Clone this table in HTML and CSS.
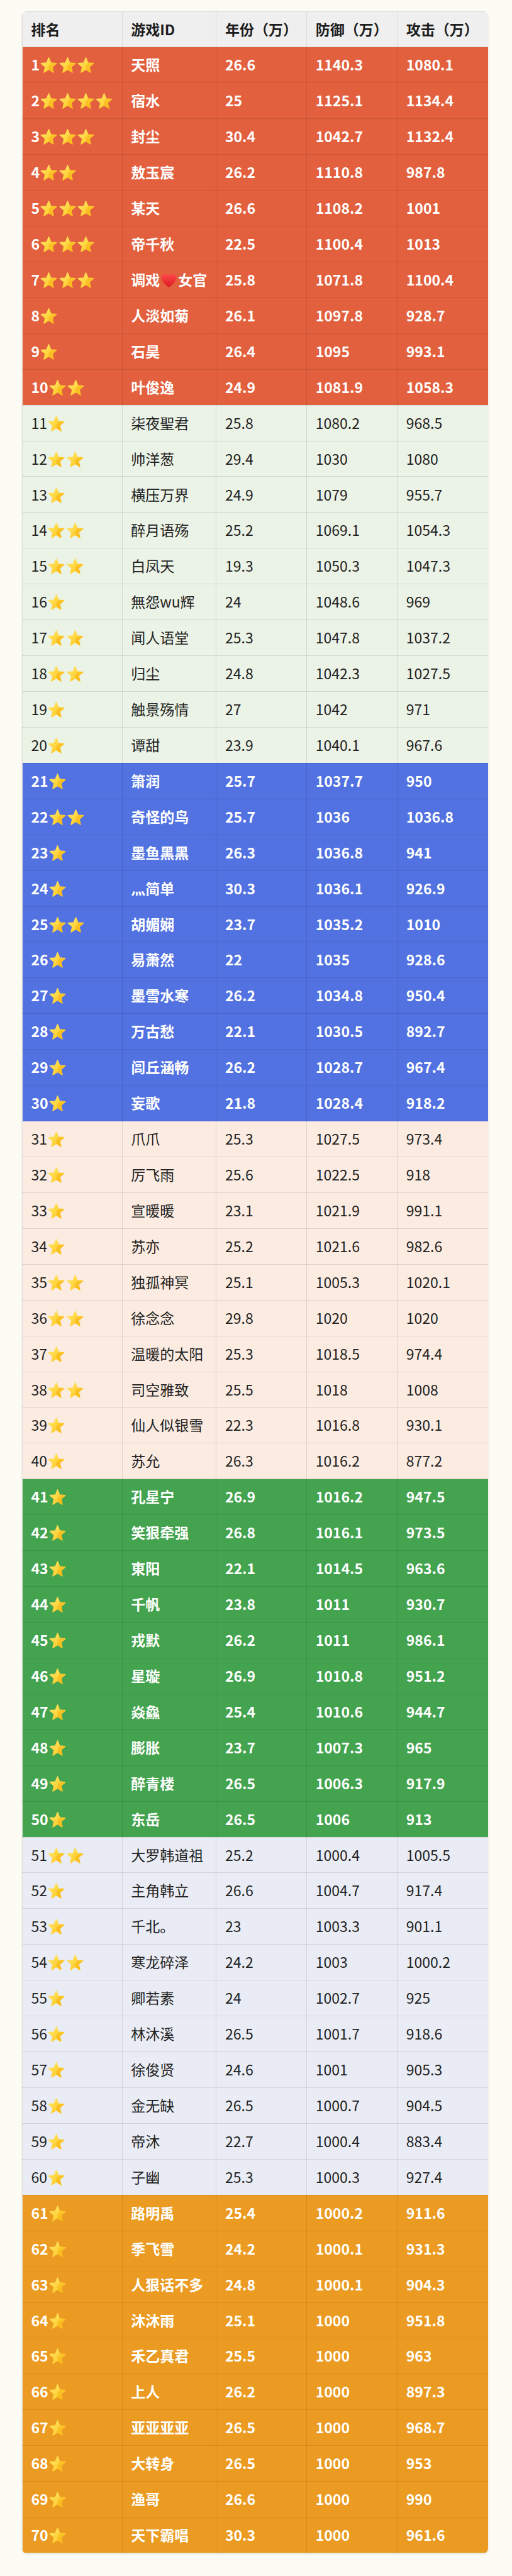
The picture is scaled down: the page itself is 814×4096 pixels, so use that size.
FILE: index.html
```html
<!DOCTYPE html>
<html lang="zh-CN">
<head>
<meta charset="utf-8">
<title>排名</title>
<link rel="stylesheet" href="styles.css">
</head>
<body>
<svg class="defs" aria-hidden="true">
  <defs>
    <linearGradient id="sg" x1="0" y1="0" x2="1" y2="1">
      <stop offset="0" stop-color="#FFE866"/>
      <stop offset="1" stop-color="#FFC21A"/>
    </linearGradient>
    <linearGradient id="hg" x1="0" y1="0" x2="0" y2="1">
      <stop offset="0" stop-color="#FF4A4A"/>
      <stop offset="1" stop-color="#D9181F"/>
    </linearGradient>
    <symbol id="s" viewBox="0 0 24 24">
      <polygon points="12,1.5 15.06,8.79 22.94,9.45 16.95,14.61 18.76,22.3 12,18.2 5.24,22.3 7.05,14.61 1.06,9.45 8.94,8.79" fill="url(#sg)" stroke="url(#sg)" stroke-width="1.2" stroke-linejoin="round"/>
      <polygon points="12,13 22.94,9.45 16.95,14.61 18.76,22.3 12,18.2" fill="#F0A000" opacity="0.35"/>
      <polygon points="12,13 15.06,8.79 22.94,9.45" fill="#F6B000" opacity="0.35"/>
    </symbol>
    <symbol id="h" viewBox="0 0 24 22">
      <path d="M12 21 C5 15.8 1.2 12 1.2 7.2 C1.2 3.9 3.8 1.3 7 1.3 C9.1 1.3 11 2.5 12 4.3 C13 2.5 14.9 1.3 17 1.3 C20.2 1.3 22.8 3.9 22.8 7.2 C22.8 12 19 15.8 12 21Z" fill="url(#hg)"/>
    </symbol>
  </defs>
</svg>
<div class="page">
<div class="board">
<table class="rank">
<colgroup><col class="c1"><col class="c2"><col class="c3"><col class="c4"><col class="c5"></colgroup>
<thead>
<tr><th>排名</th><th>游戏ID</th><th>年份（万）</th><th>防御（万）</th><th>攻击（万）</th></tr>
</thead>
<tbody>
<tr class="g1"><td>1<svg class="star"><use href="#s"/></svg><svg class="star"><use href="#s"/></svg><svg class="star"><use href="#s"/></svg></td><td>天照</td><td>26.6</td><td>1140.3</td><td>1080.1</td></tr>
<tr class="g1"><td>2<svg class="star"><use href="#s"/></svg><svg class="star"><use href="#s"/></svg><svg class="star"><use href="#s"/></svg><svg class="star"><use href="#s"/></svg></td><td>宿水</td><td>25</td><td>1125.1</td><td>1134.4</td></tr>
<tr class="g1"><td>3<svg class="star"><use href="#s"/></svg><svg class="star"><use href="#s"/></svg><svg class="star"><use href="#s"/></svg></td><td>封尘</td><td>30.4</td><td>1042.7</td><td>1132.4</td></tr>
<tr class="g1"><td>4<svg class="star"><use href="#s"/></svg><svg class="star"><use href="#s"/></svg></td><td>敖玉宸</td><td>26.2</td><td>1110.8</td><td>987.8</td></tr>
<tr class="g1"><td>5<svg class="star"><use href="#s"/></svg><svg class="star"><use href="#s"/></svg><svg class="star"><use href="#s"/></svg></td><td>某天</td><td>26.6</td><td>1108.2</td><td>1001</td></tr>
<tr class="g1"><td>6<svg class="star"><use href="#s"/></svg><svg class="star"><use href="#s"/></svg><svg class="star"><use href="#s"/></svg></td><td>帝千秋</td><td>22.5</td><td>1100.4</td><td>1013</td></tr>
<tr class="g1"><td>7<svg class="star"><use href="#s"/></svg><svg class="star"><use href="#s"/></svg><svg class="star"><use href="#s"/></svg></td><td>调戏<svg class="heart"><use href="#h"/></svg>女官</td><td>25.8</td><td>1071.8</td><td>1100.4</td></tr>
<tr class="g1"><td>8<svg class="star"><use href="#s"/></svg></td><td>人淡如菊</td><td>26.1</td><td>1097.8</td><td>928.7</td></tr>
<tr class="g1"><td>9<svg class="star"><use href="#s"/></svg></td><td>石昊</td><td>26.4</td><td>1095</td><td>993.1</td></tr>
<tr class="g1"><td>10<svg class="star"><use href="#s"/></svg><svg class="star"><use href="#s"/></svg></td><td>叶俊逸</td><td>24.9</td><td>1081.9</td><td>1058.3</td></tr>

<tr class="g2"><td>11<svg class="star"><use href="#s"/></svg></td><td>柒夜聖君</td><td>25.8</td><td>1080.2</td><td>968.5</td></tr>
<tr class="g2"><td>12<svg class="star"><use href="#s"/></svg><svg class="star"><use href="#s"/></svg></td><td>帅洋葱</td><td>29.4</td><td>1030</td><td>1080</td></tr>
<tr class="g2"><td>13<svg class="star"><use href="#s"/></svg></td><td>横压万界</td><td>24.9</td><td>1079</td><td>955.7</td></tr>
<tr class="g2"><td>14<svg class="star"><use href="#s"/></svg><svg class="star"><use href="#s"/></svg></td><td>醉月语殇</td><td>25.2</td><td>1069.1</td><td>1054.3</td></tr>
<tr class="g2"><td>15<svg class="star"><use href="#s"/></svg><svg class="star"><use href="#s"/></svg></td><td>白凤天</td><td>19.3</td><td>1050.3</td><td>1047.3</td></tr>
<tr class="g2"><td>16<svg class="star"><use href="#s"/></svg></td><td>無怨wu辉</td><td>24</td><td>1048.6</td><td>969</td></tr>
<tr class="g2"><td>17<svg class="star"><use href="#s"/></svg><svg class="star"><use href="#s"/></svg></td><td>闻人语堂</td><td>25.3</td><td>1047.8</td><td>1037.2</td></tr>
<tr class="g2"><td>18<svg class="star"><use href="#s"/></svg><svg class="star"><use href="#s"/></svg></td><td>归尘</td><td>24.8</td><td>1042.3</td><td>1027.5</td></tr>
<tr class="g2"><td>19<svg class="star"><use href="#s"/></svg></td><td>触景殇情</td><td>27</td><td>1042</td><td>971</td></tr>
<tr class="g2"><td>20<svg class="star"><use href="#s"/></svg></td><td>谭甜</td><td>23.9</td><td>1040.1</td><td>967.6</td></tr>

<tr class="g3"><td>21<svg class="star"><use href="#s"/></svg></td><td>箫润</td><td>25.7</td><td>1037.7</td><td>950</td></tr>
<tr class="g3"><td>22<svg class="star"><use href="#s"/></svg><svg class="star"><use href="#s"/></svg></td><td>奇怪的鸟</td><td>25.7</td><td>1036</td><td>1036.8</td></tr>
<tr class="g3"><td>23<svg class="star"><use href="#s"/></svg></td><td>墨鱼黑黑</td><td>26.3</td><td>1036.8</td><td>941</td></tr>
<tr class="g3"><td>24<svg class="star"><use href="#s"/></svg></td><td>灬简单</td><td>30.3</td><td>1036.1</td><td>926.9</td></tr>
<tr class="g3"><td>25<svg class="star"><use href="#s"/></svg><svg class="star"><use href="#s"/></svg></td><td>胡媚娴</td><td>23.7</td><td>1035.2</td><td>1010</td></tr>
<tr class="g3"><td>26<svg class="star"><use href="#s"/></svg></td><td>易萧然</td><td>22</td><td>1035</td><td>928.6</td></tr>
<tr class="g3"><td>27<svg class="star"><use href="#s"/></svg></td><td>墨雪水寒</td><td>26.2</td><td>1034.8</td><td>950.4</td></tr>
<tr class="g3"><td>28<svg class="star"><use href="#s"/></svg></td><td>万古愁</td><td>22.1</td><td>1030.5</td><td>892.7</td></tr>
<tr class="g3"><td>29<svg class="star"><use href="#s"/></svg></td><td>闾丘涵畅</td><td>26.2</td><td>1028.7</td><td>967.4</td></tr>
<tr class="g3"><td>30<svg class="star"><use href="#s"/></svg></td><td>妄歌</td><td>21.8</td><td>1028.4</td><td>918.2</td></tr>

<tr class="g4"><td>31<svg class="star"><use href="#s"/></svg></td><td>爪爪</td><td>25.3</td><td>1027.5</td><td>973.4</td></tr>
<tr class="g4"><td>32<svg class="star"><use href="#s"/></svg></td><td>厉飞雨</td><td>25.6</td><td>1022.5</td><td>918</td></tr>
<tr class="g4"><td>33<svg class="star"><use href="#s"/></svg></td><td>宣暖暖</td><td>23.1</td><td>1021.9</td><td>991.1</td></tr>
<tr class="g4"><td>34<svg class="star"><use href="#s"/></svg></td><td>苏亦</td><td>25.2</td><td>1021.6</td><td>982.6</td></tr>
<tr class="g4"><td>35<svg class="star"><use href="#s"/></svg><svg class="star"><use href="#s"/></svg></td><td>独孤神冥</td><td>25.1</td><td>1005.3</td><td>1020.1</td></tr>
<tr class="g4"><td>36<svg class="star"><use href="#s"/></svg><svg class="star"><use href="#s"/></svg></td><td>徐念念</td><td>29.8</td><td>1020</td><td>1020</td></tr>
<tr class="g4"><td>37<svg class="star"><use href="#s"/></svg></td><td>温暖的太阳</td><td>25.3</td><td>1018.5</td><td>974.4</td></tr>
<tr class="g4"><td>38<svg class="star"><use href="#s"/></svg><svg class="star"><use href="#s"/></svg></td><td>司空雅致</td><td>25.5</td><td>1018</td><td>1008</td></tr>
<tr class="g4"><td>39<svg class="star"><use href="#s"/></svg></td><td>仙人似银雪</td><td>22.3</td><td>1016.8</td><td>930.1</td></tr>
<tr class="g4"><td>40<svg class="star"><use href="#s"/></svg></td><td>苏允</td><td>26.3</td><td>1016.2</td><td>877.2</td></tr>

<tr class="g5"><td>41<svg class="star"><use href="#s"/></svg></td><td>孔星宁</td><td>26.9</td><td>1016.2</td><td>947.5</td></tr>
<tr class="g5"><td>42<svg class="star"><use href="#s"/></svg></td><td>笑狠牵强</td><td>26.8</td><td>1016.1</td><td>973.5</td></tr>
<tr class="g5"><td>43<svg class="star"><use href="#s"/></svg></td><td>東阳</td><td>22.1</td><td>1014.5</td><td>963.6</td></tr>
<tr class="g5"><td>44<svg class="star"><use href="#s"/></svg></td><td>千帆</td><td>23.8</td><td>1011</td><td>930.7</td></tr>
<tr class="g5"><td>45<svg class="star"><use href="#s"/></svg></td><td>戎默</td><td>26.2</td><td>1011</td><td>986.1</td></tr>
<tr class="g5"><td>46<svg class="star"><use href="#s"/></svg></td><td>星璇</td><td>26.9</td><td>1010.8</td><td>951.2</td></tr>
<tr class="g5"><td>47<svg class="star"><use href="#s"/></svg></td><td>焱鱻</td><td>25.4</td><td>1010.6</td><td>944.7</td></tr>
<tr class="g5"><td>48<svg class="star"><use href="#s"/></svg></td><td>膨胀</td><td>23.7</td><td>1007.3</td><td>965</td></tr>
<tr class="g5"><td>49<svg class="star"><use href="#s"/></svg></td><td>醉青楼</td><td>26.5</td><td>1006.3</td><td>917.9</td></tr>
<tr class="g5"><td>50<svg class="star"><use href="#s"/></svg></td><td>东岳</td><td>26.5</td><td>1006</td><td>913</td></tr>

<tr class="g6"><td>51<svg class="star"><use href="#s"/></svg><svg class="star"><use href="#s"/></svg></td><td>大罗韩道祖</td><td>25.2</td><td>1000.4</td><td>1005.5</td></tr>
<tr class="g6"><td>52<svg class="star"><use href="#s"/></svg></td><td>主角韩立</td><td>26.6</td><td>1004.7</td><td>917.4</td></tr>
<tr class="g6"><td>53<svg class="star"><use href="#s"/></svg></td><td>千北。</td><td>23</td><td>1003.3</td><td>901.1</td></tr>
<tr class="g6"><td>54<svg class="star"><use href="#s"/></svg><svg class="star"><use href="#s"/></svg></td><td>寒龙碎泽</td><td>24.2</td><td>1003</td><td>1000.2</td></tr>
<tr class="g6"><td>55<svg class="star"><use href="#s"/></svg></td><td>卿若素</td><td>24</td><td>1002.7</td><td>925</td></tr>
<tr class="g6"><td>56<svg class="star"><use href="#s"/></svg></td><td>林沐溪</td><td>26.5</td><td>1001.7</td><td>918.6</td></tr>
<tr class="g6"><td>57<svg class="star"><use href="#s"/></svg></td><td>徐俊贤</td><td>24.6</td><td>1001</td><td>905.3</td></tr>
<tr class="g6"><td>58<svg class="star"><use href="#s"/></svg></td><td>金无缺</td><td>26.5</td><td>1000.7</td><td>904.5</td></tr>
<tr class="g6"><td>59<svg class="star"><use href="#s"/></svg></td><td>帝沐</td><td>22.7</td><td>1000.4</td><td>883.4</td></tr>
<tr class="g6"><td>60<svg class="star"><use href="#s"/></svg></td><td>子幽</td><td>25.3</td><td>1000.3</td><td>927.4</td></tr>

<tr class="g7"><td>61<svg class="star"><use href="#s"/></svg></td><td>路明禹</td><td>25.4</td><td>1000.2</td><td>911.6</td></tr>
<tr class="g7"><td>62<svg class="star"><use href="#s"/></svg></td><td>季飞雪</td><td>24.2</td><td>1000.1</td><td>931.3</td></tr>
<tr class="g7"><td>63<svg class="star"><use href="#s"/></svg></td><td>人狠话不多</td><td>24.8</td><td>1000.1</td><td>904.3</td></tr>
<tr class="g7"><td>64<svg class="star"><use href="#s"/></svg></td><td>沐沐雨</td><td>25.1</td><td>1000</td><td>951.8</td></tr>
<tr class="g7"><td>65<svg class="star"><use href="#s"/></svg></td><td>禾乙真君</td><td>25.5</td><td>1000</td><td>963</td></tr>
<tr class="g7"><td>66<svg class="star"><use href="#s"/></svg></td><td>上人</td><td>26.2</td><td>1000</td><td>897.3</td></tr>
<tr class="g7"><td>67<svg class="star"><use href="#s"/></svg></td><td>亚亚亚亚</td><td>26.5</td><td>1000</td><td>968.7</td></tr>
<tr class="g7"><td>68<svg class="star"><use href="#s"/></svg></td><td>大转身</td><td>26.5</td><td>1000</td><td>953</td></tr>
<tr class="g7"><td>69<svg class="star"><use href="#s"/></svg></td><td>渔哥</td><td>26.6</td><td>1000</td><td>990</td></tr>
<tr class="g7"><td>70<svg class="star"><use href="#s"/></svg></td><td>天下霸唱</td><td>30.3</td><td>1000</td><td>961.6</td></tr>
</tbody>
</table>
</div>
</div>
</body>
</html>
```

FILE: styles.css
```css
html, body {
  margin: 0;
  background: #fcfbf4;
}
body {
  font-family: "Noto Sans CJK SC", "Noto Sans", sans-serif;
  color: #222;
}
.defs {
  display: block;
  width: 0;
  height: 0;
  overflow: hidden;
}
.page {
  padding: 17.5px 0 36px 35px;
}
.board {
  width: 741px;
  border-radius: 8px;
  overflow: hidden;
  box-shadow: 0 1px 3px rgba(0, 0, 0, 0.12);
}
.rank {
  width: 741px;
  border-collapse: collapse;
  table-layout: fixed;
  font-size: 23px;
}
.c1 { width: 158.7px; }
.c2 { width: 149.8px; }
.c3 { width: 143.7px; }
.c4 { width: 144.1px; }
.c5 { width: 144.7px; }
.rank tr {
  height: 56.93px;
}
.rank th,
.rank td {
  padding: 0 0 0 13.5px;
  text-align: left;
  white-space: nowrap;
  border: 1px solid rgba(0, 0, 0, 0.09);
  line-height: 1.3;
}
.rank th {
  background: #efefef;
  font-weight: 700;
  color: #1d1d1d;
  border-color: #dcdcdc;
}
.rank td {
  font-weight: 400;
}
.star {
  width: 27px;
  height: 27px;
  margin: 0 1.2px;
  vertical-align: -5px;
}
.heart {
  width: 27px;
  height: 24px;
  margin: 0 1px;
  vertical-align: -4px;
}
.g1 td { background: #e2603e; }
.g2 td { background: #ebf2e6; }
.g3 td { background: #5172e0; }
.g4 td { background: #fbebe1; }
.g5 td { background: #43a34f; }
.g6 td { background: #e9ecf4; }
.g7 td { background: #eb9b22; }
.g1 td, .g3 td, .g5 td, .g7 td {
  color: #fff;
  font-weight: 700;
}
.g2 td, .g4 td, .g6 td {
  color: #222;
  border-color: rgba(0, 0, 0, 0.1);
}
```
